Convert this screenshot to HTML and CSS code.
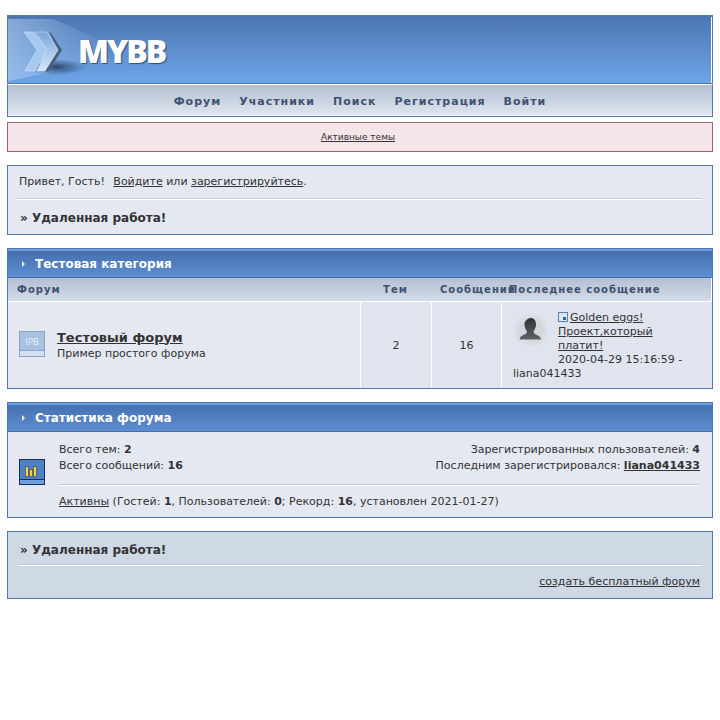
FILE: index.html
```html
<!DOCTYPE html>
<html lang="ru">
<head>
    <meta charset="UTF-8">
    <title>Удаленная работа!</title>
    <link rel="stylesheet" href="styles.css">
</head>
<body>
    <div class="wrapper">
        <div class="logo-strip">
            <div class="logo">
                <svg class="logo-mark" width="150" height="66" viewBox="0 0 150 66">
                    <defs>
                        <linearGradient id="glow" x1="0" y1="0" x2="1" y2="0">
                            <stop offset="0" stop-color="#b7d2f2" stop-opacity="0.55"/>
                            <stop offset="1" stop-color="#a9c8ee" stop-opacity="0"/>
                        </linearGradient>
                        <linearGradient id="chev" x1="0" y1="0" x2="0" y2="1">
                            <stop offset="0" stop-color="#7ba6de"/>
                            <stop offset="1" stop-color="#d4e6fa"/>
                        </linearGradient>
                        <radialGradient id="shade">
                            <stop offset="0" stop-color="#1c3558" stop-opacity="0.85"/>
                            <stop offset="1" stop-color="#1c3558" stop-opacity="0"/>
                        </radialGradient>
                    </defs>
                    <polygon points="0,2 45,2 105,28 70,50 0,64" fill="url(#glow)"/>
                    <ellipse cx="48" cy="50" rx="30" ry="8" fill="url(#shade)"/>
                    <polygon points="41,15 43,16 54,33 40,55 37,54 50,33" fill="#4a5f7c"/>
                    <polygon points="16,15 25,15 39,32 27,54 17,54 29,33" fill="#a6c9f0" stroke="#e4effb" stroke-width="0.5"/>
                    <polygon points="27,15 39,15 50,33 37,54 29,54 39,33" fill="url(#chev)" stroke="#e4effb" stroke-width="0.5"/>
                </svg>
                <span class="logo-text">MYBB</span>
            </div>
        </div>
        <div class="submenu">
            <a href="#">Форум</a>
            <a href="#">Участники</a>
            <a href="#">Поиск</a>
            <a href="#">Регистрация</a>
            <a href="#">Войти</a>
        </div>

        <div class="notice"><a href="#">Активные темы</a></div>

        <div class="panel welcome">
            <p class="hello">Привет, Гость! <a class="login" href="#">Войдите</a> или <a href="#">зарегистрируйтесь</a>.</p>
            <hr class="rule">
            <p class="board-title">» Удаленная работа!</p>
        </div>

        <div class="panel block">
            <h2 class="maintitle"><span class="arrow"></span>Тестовая категория</h2>
            <div class="forum-grid head">
                <div>Форум</div>
                <div class="center">Тем</div>
                <div class="posts-head">Сообщений</div>
                <div>Последнее сообщение</div>
            </div>
            <div class="forum-grid row">
                <div class="forum-cell">
                    <svg class="forum-icon" width="26" height="26" viewBox="0 0 26 26">
                        <rect x="0.5" y="0.5" width="25" height="25" fill="#d6e1f0" stroke="#8ea3c4"/>
                        <rect x="1" y="1" width="24" height="18" fill="#a9c1e1"/>
                        <line x1="1" y1="19.5" x2="25" y2="19.5" stroke="#8ea3c4"/>
                        <text x="13" y="14" class="ipb">IPB</text>
                    </svg>
                    <div>
                        <a class="forum-name" href="#">Тестовый форум</a>
                        <div>Пример простого форума</div>
                    </div>
                </div>
                <div class="count">2</div>
                <div class="count">16</div>
                <div class="last">
                    <svg class="avatar" width="36" height="36" viewBox="0 0 36 36">
                        <defs>
                            <radialGradient id="halo">
                                <stop offset="0.55" stop-color="#d3d6db"/>
                                <stop offset="1" stop-color="#dfe4ee"/>
                            </radialGradient>
                            <linearGradient id="bust" x1="0" y1="0" x2="0" y2="1">
                                <stop offset="0" stop-color="#2f3133"/>
                                <stop offset="1" stop-color="#5f6264"/>
                            </linearGradient>
                        </defs>
                        <circle cx="18" cy="18" r="18" fill="url(#halo)"/>
                        <path d="M18 6c3.500 0 5 3 5 6.500 0 3-1.500 5.500-2.500 7 0 1.500 1 2.500 3.500 3.500 2 .8 3.500 2 4 4.500H6.500c.5-2.500 2-3.700 4-4.500 2.500-1 3.500-2 3.500-3.500-1-1.500-2.500-4-2.500-7C11.500 9 14.500 6 18 6z" fill="url(#bust)"/>
                    </svg>
                    <svg class="post-icon" width="10" height="10" viewBox="0 0 10 10">
                        <rect x="0.5" y="0.5" width="9" height="9" fill="#dbe6f5" stroke="#5b7fb5"/>
                        <rect x="5" y="5" width="3" height="3" fill="#3c5f94"/>
                    </svg><a href="#">Golden eggs! Проект,который платит!</a><br>
                    2020-04-29 15:16:59 - <a class="plain" href="#">liana041433</a>
                </div>
            </div>
        </div>

        <div class="panel block">
            <h2 class="maintitle"><span class="arrow"></span>Статистика форума</h2>
            <div class="stats">
                <svg class="stats-icon" width="26" height="26" viewBox="0 0 26 26">
                    <rect x="0.5" y="0.5" width="25" height="25" fill="#4f81c4" stroke="#12305f"/>
                    <line x1="1" y1="20.500" x2="25" y2="20.500" stroke="#12305f"/>
                    <rect x="1" y="21" width="24" height="4" fill="#6f9fdc"/>
                    <rect x="6.500" y="7.500" width="3" height="10" fill="#f5d33c" stroke="#2b3f63" stroke-width="0.6"/>
                    <rect x="10.500" y="10.500" width="3" height="7" fill="#f5d33c" stroke="#2b3f63" stroke-width="0.6"/>
                    <rect x="14.500" y="7.500" width="3" height="10" fill="#f5d33c" stroke="#2b3f63" stroke-width="0.6"/>
                </svg>
                <div class="stats-body">
                    <div class="stats-cols">
                        <div>
                            <div>Всего тем: <b>2</b></div>
                            <div>Всего сообщений: <b>16</b></div>
                        </div>
                        <div class="right">
                            <div>Зарегистрированных пользователей: <b>4</b></div>
                            <div>Последним зарегистрировался: <a href="#"><b>liana041433</b></a></div>
                        </div>
                    </div>
                    <hr class="rule stats-rule">
                    <div><a href="#">Активны</a> (Гостей: <b>1</b>, Пользователей: <b>0</b>; Рекорд: <b>16</b>, установлен 2021-01-27)</div>
                </div>
            </div>
        </div>

        <div class="panel foot">
            <p class="board-title">» Удаленная работа!</p>
            <hr class="rule">
            <p class="right"><a href="#">создать бесплатный форум</a></p>
        </div>
    </div>
</body>
</html>
```

FILE: styles.css
```css
body {
    margin: 0;
    padding: 15px 7px;
    background: #fff;
    font-family: "DejaVu Sans", sans-serif;
    font-size: 11px;
    line-height: 14px;
    color: #333;
}

a {
    color: #333;
    text-decoration: underline;
}

p {
    margin: 0;
}

.logo-strip {
    height: 69px;
    box-sizing: border-box;
    border: 1px solid #5176a8;
    border-top-width: 2px;
    background: linear-gradient(#4c76b3, #6ea5e8);
    box-shadow: inset -1px 0 0 #fff;
}

.logo {
    display: flex;
    align-items: center;
    height: 100%;
    position: relative;
}

.logo-mark {
    flex: none;
}

.logo-text {
    position: absolute;
    left: 70px;
    top: 15px;
    font-family: "Open Sans", sans-serif;
    font-size: 32px;
    line-height: 38px;
    font-weight: 800;
    letter-spacing: -2px;
    color: #fff;
    text-shadow: 1px 1px 1px #2d4f80;
}

.submenu {
    display: flex;
    justify-content: center;
    align-items: center;
    gap: 18px;
    height: 33px;
    box-sizing: border-box;
    padding-top: 2px;
    border: 1px solid #5176a8;
    border-top: 1px solid #fff;
    background: linear-gradient(#b4c0d2, #dfe6f0);
    box-shadow: inset 0 -1px 0 #fff;
}

.submenu a {
    font-weight: bold;
    letter-spacing: 1px;
    color: #3e5170;
    text-decoration: none;
}

.notice {
    height: 30px;
    box-sizing: border-box;
    margin-top: 5px;
    padding-right: 4px;
    border: 1px solid #95686e;
    background: #f5e4e8;
    font-size: 9px;
    line-height: 28px;
    text-align: center;
}

.panel {
    border: 1px solid #5176a8;
    background: #e3e8f1;
    margin-top: 13px;
}

.welcome {
    height: 70px;
    box-sizing: border-box;
    padding: 9px 10px 0 11px;
}

.login {
    margin-left: 5px;
}

.rule {
    height: 0;
    margin: 0;
    border: 0;
    border-top: 1px solid #c5cbd6;
    box-shadow: 0 1px 0 #fff;
}

.welcome .rule {
    margin: 9px 0 11px -2px;
}

.board-title {
    margin-left: 1px;
    font-size: 12px;
    line-height: 16px;
    font-weight: bold;
}

.maintitle {
    height: 29px;
    box-sizing: border-box;
    margin: 0;
    padding-left: 27px;
    border-top: 2px solid #6f9fe0;
    border-bottom: 1px solid #4a6ea3;
    background: linear-gradient(#4570b0, #5d8ed0);
    font-size: 12px;
    line-height: 27px;
    font-weight: bold;
    color: #fff;
    position: relative;
}

.arrow {
    position: absolute;
    left: 14px;
    top: 10px;
    border-left: 3px solid #e8eef7;
    border-top: 3px solid transparent;
    border-bottom: 3px solid transparent;
}

.forum-grid {
    display: grid;
    grid-template-columns: 352px 71px 70px 1fr;
}

.head {
    height: 24px;
    background: linear-gradient(#b4c0d2, #d3dbe7);
    border-bottom: 1px solid #fff;
    border-right: 1px solid #fff;
    box-sizing: border-box;
    font-weight: bold;
    font-size: 10px;
    line-height: 24px;
    letter-spacing: 1px;
    color: #3e5170;
    white-space: nowrap;
}

.head > div:first-child {
    padding-left: 9px;
}

.head > div:last-child {
    padding-left: 8px;
}

.center {
    text-align: center;
}

.posts-head {
    padding-left: 9px;
}

.row {
    height: 86px;
}

.forum-cell {
    display: flex;
    align-items: center;
    gap: 12px;
    padding-left: 11px;
}

.forum-icon {
    flex: none;
    margin-top: -3px;
}

.ipb {
    font-family: "Open Sans", sans-serif;
    font-size: 9px;
    fill: #e8eef7;
    text-anchor: middle;
}

.forum-name {
    display: inline-block;
    margin-bottom: 1px;
    font-size: 13px;
    line-height: 16px;
    font-weight: bold;
}

.count {
    display: flex;
    align-items: center;
    justify-content: center;
    padding-top: 2px;
    background: #dfe4ee;
    border-left: 1px solid #fff;
}

.last {
    background: #dfe4ee;
    border-left: 1px solid #fff;
    padding: 9px 14px 0 11px;
}

.avatar {
    float: left;
    margin: 1px 9px 6px 0;
}

.post-icon {
    vertical-align: -1px;
    margin-right: 2px;
}

.plain {
    text-decoration: none;
}

.stats {
    display: flex;
    align-items: center;
    height: 85px;
    box-sizing: border-box;
    padding: 2px 12px 0 11px;
}

.stats-icon {
    flex: none;
    margin: -7px 14px 0 0;
}

.stats-body {
    flex: 1;
    line-height: 16px;
}

.stats-cols {
    display: flex;
    justify-content: space-between;
}

.right {
    text-align: right;
}

.stats-rule {
    margin: 10px 0 9px;
}

.foot {
    height: 68px;
    box-sizing: border-box;
    padding: 10px 12px 0 11px;
    background: #cfd8e5;
}

.foot .rule {
    margin: 6px -2px 10px -1px;
    border-top-color: #c0c8d6;
}
```
